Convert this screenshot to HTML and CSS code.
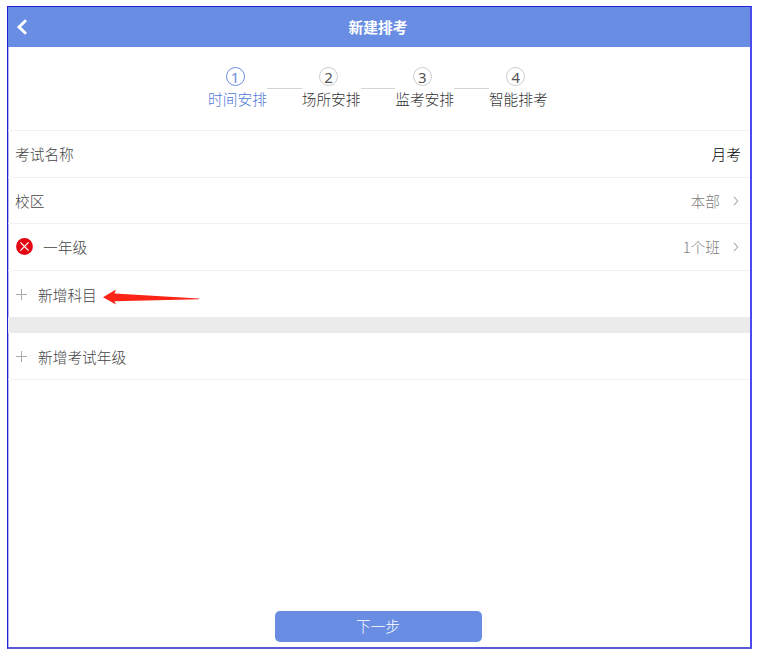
FILE: index.html
```html
<!DOCTYPE html>
<html lang="zh-CN">
<head>
<meta charset="utf-8">
<title>新建排考</title>
<link rel="stylesheet" href="styles.css">
</head>
<body>
<main class="frame">
  <header class="header">
    <svg class="back" viewBox="0 0 12 16"><path d="M10 1.3 3 8l7 6.700" fill="none" stroke="#fff" stroke-width="2.9"/></svg>
    <h1 class="title">新建排考</h1>
  </header>
  <nav class="steps">
    <div class="step active"><span class="num">1</span><span class="name">时间安排</span></div>
    <i class="link"></i>
    <div class="step"><span class="num">2</span><span class="name">场所安排</span></div>
    <i class="link"></i>
    <div class="step"><span class="num">3</span><span class="name">监考安排</span></div>
    <i class="link"></i>
    <div class="step"><span class="num">4</span><span class="name">智能排考</span></div>
  </nav>
  <section class="list">
    <div class="row"><span>考试名称</span><span class="value dark">月考</span></div>
    <div class="row"><span>校区</span><span class="value">本部</span><svg class="chevron" viewBox="0 0 6 10"><path d="M1 .8 4.6 5 1 9.2"/></svg></div>
    <div class="row">
      <svg class="remove" viewBox="0 0 17 17"><circle cx="8.5" cy="8.5" r="8.4" fill="#e30613"/><path d="m4.400 4.400 8.200 8.200m0-8.200-8.200 8.200" stroke="#fff" stroke-width="1.3"/></svg>
      <span>一年级</span><span class="value">1个班</span><svg class="chevron" viewBox="0 0 6 10"><path d="M1 .8 4.6 5 1 9.2"/></svg>
    </div>
    <div class="row last">
      <svg class="plus" viewBox="0 0 11 11"><path d="M0 5.5h11M5.5 0v11"/></svg>
      <span>新增科目</span>
      <svg class="arrow" viewBox="0 0 96 16"><path d="M0 8.200 13 .6 11.500 4.600 96 9.400v.8L11.500 12.200 13 15.500Z" fill="#fb2416"/></svg>
    </div>
  </section>
  <div class="band"></div>
  <section class="list">
    <div class="row">
      <svg class="plus" viewBox="0 0 11 11"><path d="M0 5.5h11M5.5 0v11"/></svg>
      <span>新增考试年级</span>
    </div>
  </section>
  <button class="next">下一步</button>
</main>
</body>
</html>
```
FILE: styles.css
```css
* { box-sizing: border-box; }
body {
  margin: 0;
  padding: 6px 0 0 7px;
  background: #fff;
  color: #444;
  font: 300 14.7px/20px "Noto Sans CJK SC", sans-serif;
}
.frame {
  width: 745px;
  height: 643px;
  border: solid;
  border-width: 1px 2px 2px 1px;
  border-color: #2020dc #4a4aee #5a5ad8 #2020dc;
  box-shadow: inset 1px 0 #b4b4f4;
  display: flex;
  flex-direction: column;
  background: #fff;
}
.header {
  height: 40px;
  flex: none;
  background: #688de3;
  display: grid;
  grid-template-columns: 30px 1fr 30px;
  align-items: center;
}
.back { width: 12px; height: 16px; margin: -1px 0 0 8px; }
.title {
  margin: 0 2px 0 0;
  text-align: center;
  color: #fff;
  font-size: 14.7px;
  font-weight: 700;
}
.steps {
  height: 84px;
  flex: none;
  display: flex;
  align-items: flex-start;
  padding: 20px 0 0 200px;
  border-bottom: 1px solid #f1f1f1;
}
.step {
  width: 59px;
  display: flex;
  flex-direction: column;
  align-items: center;
  color: #333;
}
.num {
  width: 19px;
  height: 19px;
  margin-right: 5px;
  border: 1px solid #ccc;
  border-radius: 50%;
  font: 400 15px/18px "Noto Sans", sans-serif;
  color: #555;
  text-align: center;
}
.name { margin-top: 3px; white-space: nowrap; }
.active { color: #4f78d8; }
.active .num { border-color: #6d8fdf; color: #6d8fdf; }
.link { width: 34.6px; height: 1px; margin-top: 21px; background: #d4d4d4; }
.row {
  height: 46.6px;
  display: flex;
  align-items: center;
  padding: 1px 9px 0 7px;
  border-bottom: 1px solid #f1f1f1;
}
.row.last { border-bottom: 0; }
.value { margin-left: auto; color: #808080; }
.value.dark { color: #000; }
.chevron { width: 6px; height: 10px; margin: 0 2px 0 13px; }
.chevron path { fill: none; stroke: #aaa; stroke-width: 1.1; }
.remove { width: 17px; height: 17px; margin: -1px 10px 0 1px; }
.plus { width: 11px; height: 11px; margin: 0 11px 0 1px; }
.plus path { stroke: #aaa; stroke-width: 1; }
.arrow { width: 96px; height: 16px; margin: 4px 0 0 6px; }
.band { height: 16px; flex: none; background: #ebebeb; }
.next {
  width: 207px;
  height: 31px;
  margin: auto auto 5px 266.5px;
  padding: 0 0 1px;
  border: 0;
  border-radius: 5px;
  background: #688de3;
  color: #fff;
  font: inherit;
}
```
